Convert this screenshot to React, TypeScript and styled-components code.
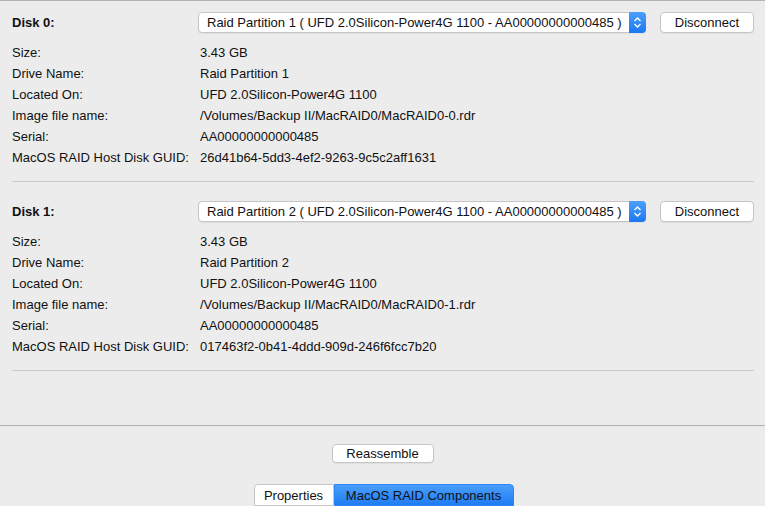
import React from "react";
import styled, { createGlobalStyle } from "styled-components";

const GlobalStyle = createGlobalStyle`
  html, body { margin: 0; padding: 0; background: #ececec; }
  body { font-family: "Liberation Sans", Arial, sans-serif; font-size: 13px; color: #111; }
  #root { height: 506px; }
`;

const Window = styled.div`
  height: 506px;
  display: flex;
  flex-direction: column;
  background: #ececec;
  border-top: 1px solid #b4b4b4;
  box-sizing: border-box;
  overflow: hidden;
`;

const Main = styled.div`
  flex: 1;
  padding: 0 11px 0 12px;
  border-bottom: 1px solid #b1b1b1;
`;

const Section = styled.section`
  padding: 19px 0 13px;
  border-bottom: 1px solid #cacaca;
  &:first-child { padding-top: 11px; }
`;

const Header = styled.div`
  display: flex;
  align-items: center;
  height: 21px;
`;

const DiskTitle = styled.div`
  width: 186px;
  font-weight: bold;
`;

const Popup = styled.div`
  position: relative;
  width: 448px;
  height: 21px;
  box-sizing: border-box;
  background: #fff;
  border: 1px solid #c6c6c6;
  border-radius: 4px;
  box-shadow: 0 1px 1px rgba(0,0,0,0.06);
  display: flex;
  align-items: center;
  padding-left: 8px;
  white-space: nowrap;
`;

const Stepper = styled.div`
  position: absolute;
  right: -1px;
  top: -1px;
  bottom: -1px;
  width: 17px;
  border-radius: 0 4px 4px 0;
  background: linear-gradient(#4c9ffb, #1c79f3);
  display: flex;
  align-items: center;
  justify-content: center;
`;

const Button = styled.button<{ $w: number }>`
  width: ${(p) => p.$w}px;
  height: 21px;
  box-sizing: border-box;
  background: #fff;
  border: 1px solid #c6c6c6;
  border-radius: 4px;
  box-shadow: 0 1px 1px rgba(0,0,0,0.06);
  font-family: inherit;
  font-size: 13px;
  color: #111;
  padding: 0;
`;

const HeaderButton = styled(Button)`
  margin-left: 14px;
`;

const Rows = styled.div`
  display: grid;
  grid-template-columns: 188px 1fr;
  grid-auto-rows: 21px;
  align-items: center;
  margin-top: 9px;
`;

const Footer = styled.div`
  height: 80px;
  display: flex;
  flex-direction: column;
  align-items: center;
  padding-top: 18px;
  box-sizing: border-box;
`;

const Tabs = styled.div`
  display: flex;
  margin-top: 21px;
  margin-left: 2px;
`;

const Tab = styled.div<{ $active?: boolean; $w: number }>`
  width: ${(p) => p.$w}px;
  height: 22px;
  box-sizing: border-box;
  display: flex;
  align-items: center;
  justify-content: center;
  border: 1px solid ${(p) => (p.$active ? "#2d86f6" : "#c6c6c6")};
  background: ${(p) => (p.$active ? "linear-gradient(#4a9efb, #1f7cf4)" : "#fff")};
  border-radius: ${(p) => (p.$active ? "0 4px 0 0" : "4px 0 0 0")};
  color: #111;
`;

const Chevrons = () => (
  <svg width="9" height="13" viewBox="0 0 9 13">
    <path d="M1.5 5 L4.5 2 L7.5 5" fill="none" stroke="#fff" strokeWidth="1.4" />
    <path d="M1.5 8 L4.5 11 L7.5 8" fill="none" stroke="#fff" strokeWidth="1.4" />
  </svg>
);

const disks = [
  {
    n: 0,
    part: "Raid Partition 1",
    image: "/Volumes/Backup II/MacRAID0/MacRAID0-0.rdr",
    guid: "26d41b64-5dd3-4ef2-9263-9c5c2aff1631",
  },
  {
    n: 1,
    part: "Raid Partition 2",
    image: "/Volumes/Backup II/MacRAID0/MacRAID0-1.rdr",
    guid: "017463f2-0b41-4ddd-909d-246f6fcc7b20",
  },
];

export default function App() {
  return (
    <>
      <GlobalStyle />
      <Window>
        <Main>
          {disks.map((d) => {
            const rows: [string, string][] = [
              ["Size:", "3.43 GB"],
              ["Drive Name:", d.part],
              ["Located On:", "UFD 2.0Silicon-Power4G 1100"],
              ["Image file name:", d.image],
              ["Serial:", "AA00000000000485"],
              ["MacOS RAID Host Disk GUID:", d.guid],
            ];
            return (
              <Section key={d.n}>
                <Header>
                  <DiskTitle>Disk {d.n}:</DiskTitle>
                  <Popup>
                    {d.part} ( UFD 2.0Silicon-Power4G 1100 - AA00000000000485 )
                    <Stepper>
                      <Chevrons />
                    </Stepper>
                  </Popup>
                  <HeaderButton $w={94}>Disconnect</HeaderButton>
                </Header>
                <Rows>
                  {rows.map(([k, v]) => (
                    <React.Fragment key={k}>
                      <div>{k}</div>
                      <div>{v}</div>
                    </React.Fragment>
                  ))}
                </Rows>
              </Section>
            );
          })}
        </Main>
        <Footer>
          <Button $w={102}>Reassemble</Button>
          <Tabs>
            <Tab $w={80}>Properties</Tab>
            <Tab $w={180} $active>MacOS RAID Components</Tab>
          </Tabs>
        </Footer>
      </Window>
    </>
  );
}
